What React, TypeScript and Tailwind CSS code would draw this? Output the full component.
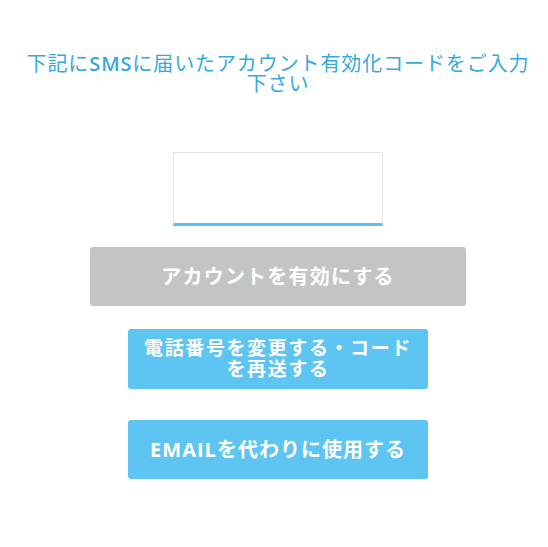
import React from 'react'

const App = () => {
  return (
    <div
      className="min-h-[547px] w-full bg-white flex flex-col items-center pl-[8px]"
      style={{ fontFamily: '"Open Sans", "Noto Sans CJK JP", sans-serif' }}
    >
      {/* Heading */}
      <h1 className="mt-[54px] text-center text-[20px] leading-[20px] text-[#35a9df] tracking-[0.9px] whitespace-nowrap">
        下記に<span className="font-semibold">SMS</span>に届いたアカウント有効化コードをご入力
        <br />
        下さい
      </h1>

      {/* Code input */}
      <div className="mt-[58px] w-[210px] h-[74px] border border-[#e6e6e6] border-b-[3px] border-b-[#5bc1ef] bg-white" />

      {/* Buttons */}
      <button className="mt-[21px] w-[376px] h-[59px] rounded-[3px] bg-[#c4c4c4] text-white text-[20px] font-bold tracking-[1.2px]">
        アカウントを有効にする
      </button>

      <button className="mt-[23px] w-[300px] h-[60px] rounded-[3px] bg-[#5ec4f2] text-white text-[19px] font-bold leading-[21px] tracking-[1.6px]">
        電話番号を変更する・コード
        <br />
        を再送する
      </button>

      <button className="mt-[31px] w-[300px] h-[59px] rounded-[3px] bg-[#5ec4f2] text-white text-[20px] font-bold tracking-[1px]">
        EMAILを代わりに使用する
      </button>
    </div>
  )
}

export default App
